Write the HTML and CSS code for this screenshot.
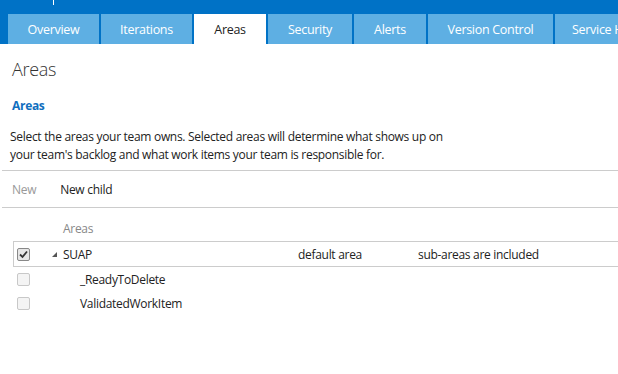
FILE: index.html
```html
<!DOCTYPE html>
<html>
<head>
    <title>Areas</title>
    <link rel="stylesheet" href="styles.css">
</head>
<body>
    <div class="topbar">
        <span class="tick"></span>
        <nav class="tabs">
            <a class="tab w-overview">Overview</a>
            <a class="tab w-iterations">Iterations</a>
            <a class="tab active w-areas">Areas</a>
            <a class="tab w-security">Security</a>
            <a class="tab w-alerts">Alerts</a>
            <a class="tab w-vc">Version Control</a>
            <a class="tab w-service">Service Hooks</a>
        </nav>
    </div>

    <div class="content">
        <h1>Areas</h1>
        <h2>Areas</h2>
        <p class="desc">Select the areas your team owns. Selected areas will determine what shows up on<br>your team's backlog and what work items your team is responsible for.</p>
    </div>

    <div class="toolbar">
        <span class="tool disabled">New</span>
        <span class="tool">New child</span>
    </div>

    <div class="grid">
        <div class="grid-head">Areas</div>
        <div class="row selected">
            <span class="check checked">
                <svg width="9" height="9" viewBox="0 0 9 9"><path d="M1 4.5 L3.5 7 L8 1.5" fill="none" stroke="#333" stroke-width="1.8"/></svg>
            </span>
            <span class="name"><span class="caret"></span>SUAP</span>
            <span class="col2">default area</span>
            <span class="col3">sub-areas are included</span>
        </div>
        <div class="row">
            <span class="check"></span>
            <span class="name child">_ReadyToDelete</span>
        </div>
        <div class="row">
            <span class="check"></span>
            <span class="name child">ValidatedWorkItem</span>
        </div>
    </div>
</body>
</html>
```

FILE: styles.css
```css
body {
    margin: 0;
    font-family: 'Segoe UI', 'Open Sans', sans-serif;
    font-size: 12px;
    letter-spacing: -0.3px;
    color: #222;
    background: #fff;
    overflow: hidden;
}
.topbar {
    background: #0072c6;
    padding-top: 14px;
    padding-left: 8px;
    position: relative;
}
.tick {
    position: absolute;
    left: 53px;
    top: 0;
    width: 1px;
    height: 5px;
    background: #fff;
}
.tabs {
    display: flex;
    height: 30px;
    white-space: nowrap;
    overflow: hidden;
}
.tab {
    display: flex;
    align-items: center;
    justify-content: center;
    background: #5eafe3;
    color: #fff;
    font-size: 12.5px;
    margin-right: 2px;
    flex-shrink: 0;
}
.tab.active {
    background: #fff;
    color: #222;
}
.w-overview { width: 91px; }
.w-iterations { width: 91px; }
.w-areas { width: 72px; }
.w-security { width: 84px; }
.w-alerts { width: 72px; }
.w-vc { width: 125px; }
.w-service { width: 110px; justify-content: flex-start; padding-left: 17px; }
.content {
    padding: 0 12px;
}
h1 {
    font-weight: 300;
    font-size: 18px;
    margin: 13px 0 0;
    color: #333;
    line-height: 24px;
}
h2 {
    font-size: 12px;
    font-weight: 700;
    color: #106ebe;
    margin: 17px 0 0;
    line-height: 16px;
}
.desc {
    margin: 14px 0 0 -2px;
    line-height: 18px;
    color: #222;
}
.toolbar {
    margin: 6px 0 0 2px;
    border-top: 1px solid #ccc;
    border-bottom: 1px solid #ccc;
    height: 36px;
    display: flex;
    align-items: center;
    padding-left: 10px;
    gap: 24px;
}
.tool { color: #222; }
.tool.disabled { color: #999; }
.grid {
    margin-top: 11px;
    padding-left: 13px;
}
.grid-head {
    color: #888;
    padding-left: 50px;
    height: 22px;
    line-height: 20px;
}
.row {
    display: flex;
    align-items: center;
    height: 24px;
}
.row.selected {
    border: 1px solid #ccc;
    border-right: none;
    height: 24px;
}
.check {
    width: 11px;
    height: 11px;
    border: 1px solid #c8c8c8;
    border-radius: 2px;
    background: #f4f4f4;
    margin-left: 4px;
    display: flex;
    align-items: center;
    justify-content: center;
}
.row.selected .check {
    margin-left: 3px;
}
.check.checked {
    background: #e6e6e6;
    border-color: #888;
}
.name {
    margin-left: 22px;
    width: 246px;
    display: flex;
    align-items: center;
}
.name.child {
    margin-left: 50px;
}
.caret {
    width: 0;
    height: 0;
    border-left: 5px solid transparent;
    border-bottom: 5px solid #555;
    margin-right: 6px;
}
.col2 { width: 120px; }
```
